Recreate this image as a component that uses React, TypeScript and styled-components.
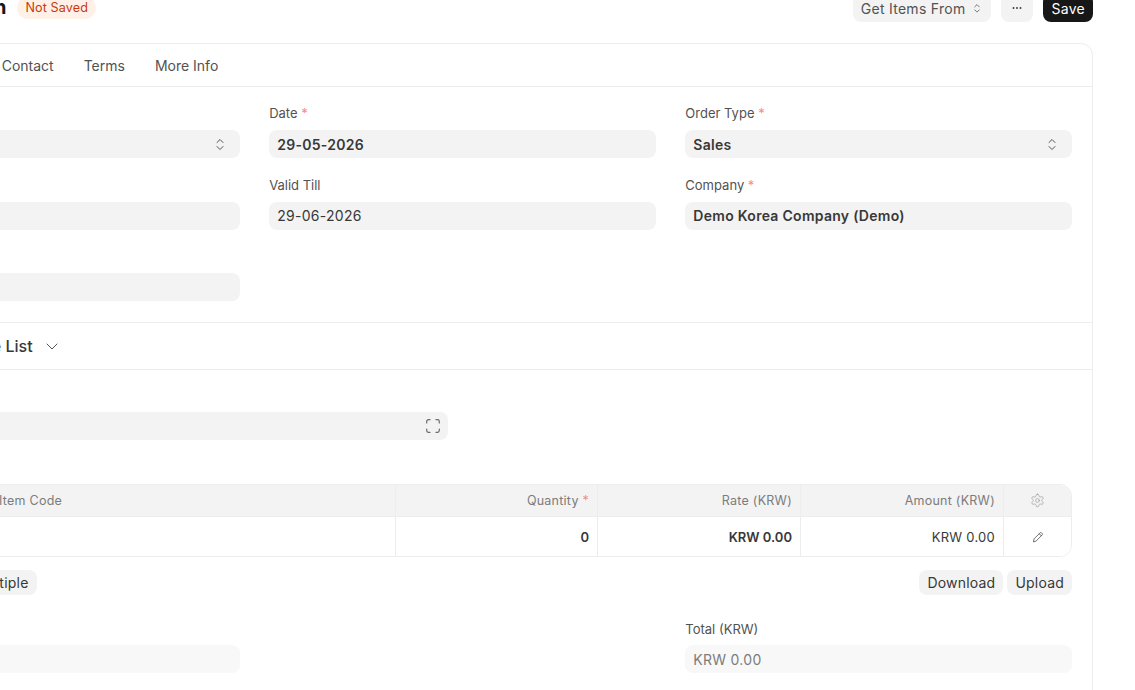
import React from "react";
import styled, { createGlobalStyle } from "styled-components";

const Global = createGlobalStyle`
  html, body { margin: 0; padding: 0; background: #fff; overflow: hidden; }
  * { box-sizing: border-box; }
  body { font-family: Inter, "Noto Sans", sans-serif; color: #171717; -webkit-font-smoothing: antialiased; }
`;

const Viewport = styled.div`
  width: 1135px;
  height: 690px;
  overflow: hidden;
`;
const Shell = styled.div`
  width: 1260px;
  margin-left: -167px;
  margin-top: -6px;
`;
const Header = styled.header`
  display: flex;
  align-items: flex-start;
  justify-content: space-between;
  height: 49px;
  padding-left: 28px;
`;
const TitleGroup = styled.div`
  display: flex;
  align-items: center;
  gap: 11px;
  height: 24px;
  margin-top: 1px;
`;
const Title = styled.h1`
  margin: 0;
  font-size: 20px;
  font-weight: 700;
  line-height: 24px;
  white-space: nowrap;
  color: #171717;
`;
const Pill = styled.span`
  display: inline-flex;
  align-items: center;
  height: 23px;
  padding: 0 8px;
  border-radius: 12px;
  background: #fff1e7;
  color: #c93a0e;
  font-size: 12.6px;
  letter-spacing: 0.01em;
`;
const Actions = styled.div`
  display: flex;
  gap: 10px;
`;
const Button = styled.button<{ $primary?: boolean }>`
  display: inline-flex;
  align-items: center;
  gap: 6px;
  height: 28px;
  padding: 0 8px;
  border: 0;
  border-radius: 8px;
  background: ${(p) => (p.$primary ? "#171717" : "#f3f3f3")};
  color: ${(p) => (p.$primary ? "#fff" : "#525252")};
  font: 400 14px Inter, sans-serif;
  letter-spacing: 0.02em;
`;
const Card = styled.main`
  width: 1260px;
  height: 720px;
  border: 1px solid #ededed;
  border-radius: 12px;
`;
const Tabs = styled.nav`
  display: flex;
  gap: 30px;
  height: 43px;
  align-items: center;
  padding-left: 96px;
  border-bottom: 1px solid #ededed;
`;
const Tab = styled.span`
  font-size: 14px;
  color: #525252;
  white-space: nowrap;
`;
const FormGrid = styled.section`
  display: grid;
  grid-template-columns: repeat(3, 1fr);
  column-gap: 29.5px;
  row-gap: 18.5px;
  padding: 18px 20px 21px 19px;
  border-bottom: 1px solid #ededed;
`;
const Field = styled.div`
  display: flex;
  flex-direction: column;
  min-width: 0;
`;
const Label = styled.label`
  height: 17px;
  margin-bottom: 8px;
  font-size: 13px;
  line-height: 17px;
  color: #525252;
  white-space: nowrap;
`;
const TotalLabel = styled(Label)`
  margin-top: 1px;
  margin-bottom: 7px;
`;
const Req = styled.span`
  color: #f58a8c;
`;
const Input = styled.div<{ $bold?: boolean; $readonly?: boolean }>`
  display: flex;
  align-items: center;
  justify-content: space-between;
  height: 28px;
  padding: 0 8px;
  border-radius: 8px;
  background: ${(p) => (p.$readonly ? "#f8f8f8" : "#f3f3f3")};
  color: ${(p) => (p.$readonly ? "#7c7c7c" : "#383838")};
  font-size: 14px;
  font-weight: ${(p) => (p.$bold ? 600 : 400)};
  letter-spacing: 0.02em;
  white-space: nowrap;
`;
const SelectArrow = styled.span`
  display: flex;
  margin-right: 4px;
`;
const CollapseHead = styled.div`
  display: flex;
  align-items: center;
  gap: 12px;
  height: 47px;
  padding-left: 20px;
  border-bottom: 1px solid #ededed;
`;
const CollapseTitle = styled.h2`
  margin: 0;
  font-size: 16px;
  font-weight: 500;
  color: #383838;
  white-space: nowrap;
`;
const ItemsSection = styled.section`
  padding: 17px 20px 0 19px;
`;
const ScanField = styled(Field)`
  width: 595px;
`;
const Table = styled.div`
  margin-top: 44px;
  border: 1px solid #ededed;
  border-radius: 12px;
  overflow: hidden;
`;
const Row = styled.div<{ $head?: boolean }>`
  display: grid;
  grid-template-columns: 60px 77px 1fr 202.5px 203px 203px 67px;
  height: ${(p) => (p.$head ? "32px" : "39px")};
  background: ${(p) => (p.$head ? "#f3f3f3" : "#fff")};
  color: ${(p) => (p.$head ? "#7c7c7c" : "#383838")};
  font-size: ${(p) => (p.$head ? "12.5px" : "13px")};
  letter-spacing: 0.02em;
  ${(p) => (p.$head ? "border-bottom: 1px solid #ededed;" : "")}
`;
const Cell = styled.div<{ $right?: boolean; $center?: boolean; $bold?: boolean; $line?: boolean }>`
  display: flex;
  align-items: center;
  padding: 0 8px;
  justify-content: ${(p) => (p.$right ? "flex-end" : p.$center ? "center" : "flex-start")};
  font-weight: ${(p) => (p.$bold ? 600 : 400)};
  letter-spacing: ${(p) => (p.$bold ? "0" : "inherit")};
  ${(p) => (p.$line ? "border-right: 1px solid #ededed;" : "")}
  white-space: nowrap;
`;
const TableFoot = styled.div`
  display: flex;
  justify-content: space-between;
  margin-top: 13px;
`;
const FootGroup = styled.div<{ $gap: number }>`
  display: flex;
  gap: ${(p) => p.$gap}px;
`;
const SmallButton = styled.button`
  height: 25px;
  padding: 0 8px;
  border: 0;
  border-radius: 8px;
  background: #f3f3f3;
  color: #383838;
  font: 400 14px Inter, sans-serif;
  letter-spacing: 0.015em;
  white-space: nowrap;
`;
const TotalsGrid = styled.div`
  display: grid;
  grid-template-columns: repeat(3, 1fr);
  column-gap: 29.5px;
  margin-top: 25px;
`;

const UpDown = ({ size = 16, color = "#525252" }: { size?: number; color?: string }) => (
  <svg width={size} height={size} viewBox="0 0 16 16" fill="none" stroke={color} strokeWidth="1" strokeLinecap="round" strokeLinejoin="round">
    <path d="M5 6.500l3-3 3 3" />
    <path d="M5 10.500l3 3 3-3" />
  </svg>
);
const Dots = () => (
  <svg width="16" height="16" viewBox="0 0 16 16" fill="#383838">
    <circle cx="4.500" cy="8" r="0.950" />
    <circle cx="8" cy="8" r="0.950" />
    <circle cx="11.500" cy="8" r="0.950" />
  </svg>
);
const Chevron = () => (
  <svg width="14" height="14" viewBox="0 0 14 14" fill="none" stroke="#525252" strokeWidth="1" strokeLinecap="round" strokeLinejoin="round">
    <path d="M2 5l5 5 5-5" />
  </svg>
);
const ScanIcon = () => (
  <svg width="14" height="14" viewBox="0 0 14 14" fill="none" stroke="#6b6b6b" strokeWidth="1.200" strokeLinecap="round" strokeLinejoin="round">
    <path d="M.700 4V2.500A1.800 1.800 0 0 1 2.500.700H4" />
    <path d="M10 .700h1.500a1.800 1.800 0 0 1 1.800 1.800V4" />
    <path d="M13.300 10v1.500a1.800 1.800 0 0 1-1.800 1.800H10" />
    <path d="M4 13.300H2.500a1.800 1.800 0 0 1-1.800-1.800V10" />
  </svg>
);
const Gear = () => (
  <svg width="15" height="15" viewBox="0 0 24 24" fill="none" stroke="#9a9a9a" strokeWidth="1.100" strokeLinecap="round" strokeLinejoin="round">
    <path d="M12.220 2h-.440a2 2 0 0 0-2 2v.180a2 2 0 0 1-1 1.730l-.430.250a2 2 0 0 1-2 0l-.150-.080a2 2 0 0 0-2.730.730l-.220.380a2 2 0 0 0 .730 2.730l.150.100a2 2 0 0 1 1 1.720v.510a2 2 0 0 1-1 1.740l-.150.090a2 2 0 0 0-.730 2.730l.220.380a2 2 0 0 0 2.730.730l.150-.080a2 2 0 0 1 2 0l.430.250a2 2 0 0 1 1 1.730V20a2 2 0 0 0 2 2h.440a2 2 0 0 0 2-2v-.180a2 2 0 0 1 1-1.730l.430-.250a2 2 0 0 1 2 0l.150.080a2 2 0 0 0 2.730-.730l.220-.390a2 2 0 0 0-.730-2.730l-.150-.080a2 2 0 0 1-1-1.740v-.500a2 2 0 0 1 1-1.740l.150-.090a2 2 0 0 0 .730-2.730l-.220-.380a2 2 0 0 0-2.730-.730l-.150.080a2 2 0 0 1-2 0l-.430-.250a2 2 0 0 1-1-1.730V4a2 2 0 0 0-2-2z" />
    <circle cx="12" cy="12" r="3" />
  </svg>
);
const Pencil = () => (
  <svg width="12" height="12" viewBox="0 0 12 12" fill="none" stroke="#525252" strokeWidth="0.800" strokeLinecap="round" strokeLinejoin="round">
    <path d="M1.500 10.500l.600-2.700 6-6a1 1 0 0 1 1.400 0l.700.700a1 1 0 0 1 0 1.400l-6 6z" />
    <path d="M7.300 2.800l2 2" />
  </svg>
);

export default function App() {
  return (
    <>
      <Global />
      <Viewport>
        <Shell>
          <Header>
            <TitleGroup>
              <Title>New Quotation</Title>
              <Pill>Not Saved</Pill>
            </TitleGroup>
            <Actions>
              <Button>Get Items From <UpDown size={12} /></Button>
              <Button><Dots /></Button>
              <Button $primary>Save</Button>
            </Actions>
          </Header>
          <Card>
            <Tabs>
              <Tab>Address &amp; Contact</Tab>
              <Tab>Terms</Tab>
              <Tab>More Info</Tab>
            </Tabs>
            <FormGrid>
              <Field>
                <Label>Series <Req>*</Req></Label>
                <Input>SAL-QTN-.YYYY.- <SelectArrow><UpDown /></SelectArrow></Input>
              </Field>
              <Field>
                <Label>Date <Req>*</Req></Label>
                <Input $bold>29-05-2026</Input>
              </Field>
              <Field>
                <Label>Order Type <Req>*</Req></Label>
                <Input $bold>Sales <SelectArrow><UpDown /></SelectArrow></Input>
              </Field>
              <Field>
                <Label>Party</Label>
                <Input />
              </Field>
              <Field>
                <Label>Valid Till</Label>
                <Input>29-06-2026</Input>
              </Field>
              <Field>
                <Label>Company <Req>*</Req></Label>
                <Input $bold>Demo Korea Company (Demo)</Input>
              </Field>
              <Field>
                <Label>Customer Name</Label>
                <Input />
              </Field>
            </FormGrid>
            <CollapseHead>
              <CollapseTitle>Currency and Price List</CollapseTitle>
              <Chevron />
            </CollapseHead>
            <ItemsSection>
              <ScanField>
                <Label>Scan Barcode</Label>
                <Input><span /><ScanIcon /></Input>
              </ScanField>
              <Table>
                <Row $head>
                  <Cell />
                  <Cell>No.</Cell>
                  <Cell $line>Item Code</Cell>
                  <Cell $right $line>Quantity&nbsp;<Req>*</Req></Cell>
                  <Cell $right $line>Rate (KRW)</Cell>
                  <Cell $right $line>Amount (KRW)</Cell>
                  <Cell $center><Gear /></Cell>
                </Row>
                <Row>
                  <Cell />
                  <Cell>1</Cell>
                  <Cell $line />
                  <Cell $right $bold $line>0</Cell>
                  <Cell $right $bold $line>KRW 0.00</Cell>
                  <Cell $right $line>KRW 0.00</Cell>
                  <Cell $center><Pencil /></Cell>
                </Row>
              </Table>
              <TableFoot>
                <FootGroup $gap={5}>
                  <SmallButton>Add Row</SmallButton>
                  <SmallButton>Add Multiple</SmallButton>
                </FootGroup>
                <FootGroup $gap={4}>
                  <SmallButton>Download</SmallButton>
                  <SmallButton>Upload</SmallButton>
                </FootGroup>
              </TableFoot>
              <TotalsGrid>
                <Field>
                  <TotalLabel>Total Quantity</TotalLabel>
                  <Input $readonly />
                </Field>
                <span />
                <Field>
                  <TotalLabel>Total (KRW)</TotalLabel>
                  <Input $readonly>KRW 0.00</Input>
                </Field>
              </TotalsGrid>
            </ItemsSection>
          </Card>
        </Shell>
      </Viewport>
    </>
  );
}
